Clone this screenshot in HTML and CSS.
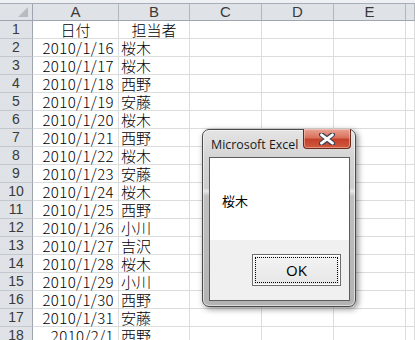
FILE: index.html
```html
<!DOCTYPE html>
<html lang="ja">
<head>
	<meta charset="utf-8" />
	<title>Microsoft Excel</title>
	<link rel="stylesheet" href="styles.css">
</head>
<body>

	<div class="strip"></div>

	<table class="sheet">
		<colgroup>
			<col class="col-head">
			<col class="col-a">
			<col class="col-b">
			<col class="col-n">
			<col class="col-n">
			<col class="col-n">
			<col class="col-end">
		</colgroup>
		<thead>
			<tr><th class="corner"></th><th>A</th><th>B</th><th>C</th><th>D</th><th>E</th><th></th></tr>
		</thead>
		<tbody>
			<tr><th>1</th><td class="mid">日付</td><td class="mid">担当者</td><td></td><td></td><td></td><td></td></tr>
			<tr><th>2</th><td class="num">2010/1/16</td><td>桜木</td><td></td><td></td><td></td><td></td></tr>
			<tr><th>3</th><td class="num">2010/1/17</td><td>桜木</td><td></td><td></td><td></td><td></td></tr>
			<tr><th>4</th><td class="num">2010/1/18</td><td>西野</td><td></td><td></td><td></td><td></td></tr>
			<tr><th>5</th><td class="num">2010/1/19</td><td>安藤</td><td></td><td></td><td></td><td></td></tr>
			<tr><th>6</th><td class="num">2010/1/20</td><td>桜木</td><td></td><td></td><td></td><td></td></tr>
			<tr><th>7</th><td class="num">2010/1/21</td><td>西野</td><td></td><td></td><td></td><td></td></tr>
			<tr><th>8</th><td class="num">2010/1/22</td><td>桜木</td><td></td><td></td><td></td><td></td></tr>
			<tr><th>9</th><td class="num">2010/1/23</td><td>安藤</td><td></td><td></td><td></td><td></td></tr>
			<tr><th>10</th><td class="num">2010/1/24</td><td>桜木</td><td></td><td></td><td></td><td></td></tr>
			<tr><th>11</th><td class="num">2010/1/25</td><td>西野</td><td></td><td></td><td></td><td></td></tr>
			<tr><th>12</th><td class="num">2010/1/26</td><td>小川</td><td></td><td></td><td></td><td></td></tr>
			<tr><th>13</th><td class="num">2010/1/27</td><td>吉沢</td><td></td><td></td><td></td><td></td></tr>
			<tr><th>14</th><td class="num">2010/1/28</td><td>桜木</td><td></td><td></td><td></td><td></td></tr>
			<tr><th>15</th><td class="num">2010/1/29</td><td>小川</td><td></td><td></td><td></td><td></td></tr>
			<tr><th>16</th><td class="num">2010/1/30</td><td>西野</td><td></td><td></td><td></td><td></td></tr>
			<tr><th>17</th><td class="num">2010/1/31</td><td>安藤</td><td></td><td></td><td></td><td></td></tr>
			<tr><th>18</th><td class="num">2010/2/1</td><td>西野</td><td></td><td></td><td></td><td></td></tr>
		</tbody>
	</table>

	<!-- MsgBox -->
	<div class="msgbox">
		<div class="msgbox-title">
			<span>Microsoft Excel</span>
			<div class="close">
				<svg width="16" height="12" viewBox="0 0 16 12">
					<path d="M2.5 1.5 L13.5 10.5 M13.5 1.5 L2.5 10.5" stroke="#3c3f52" stroke-width="5" stroke-linecap="round" />
					<path d="M2.5 1.8 L13.5 10.2 M13.5 1.8 L2.5 10.2" stroke="#ffffff" stroke-width="2.8" stroke-linecap="round" />
				</svg>
			</div>
		</div>
		<div class="msgbox-client">
			<div class="msgbox-body">桜木</div>
			<div class="msgbox-foot">
				<button class="ok"><span>OK</span></button>
			</div>
		</div>
	</div>

</body>
</html>
```

FILE: styles.css
```css
* {
	box-sizing: border-box;
}

body {
	margin: 0;
	padding: 0;
	background: #ffffff;
	overflow: hidden;
	font-family: 'Noto Sans CJK JP', sans-serif;
	font-size: 15px;
	color: #000000;
}

.strip {
	height: 4px;
	background: #eef0f3;
	border-bottom: 1px solid #a7aeb8;
}


/*Sheet*/
.sheet {
	border-collapse: separate;
	border-spacing: 0;
	table-layout: fixed;
	width: 415px;
}
.col-head { width: 33px; }
.col-a { width: 86px; }
.col-b { width: 71px; }
.col-n { width: 72px; }
.col-end { width: 9px; }

.sheet th,
.sheet td {
	height: 18px;
	padding: 0;
	border-right: 1px solid #dadcdd;
	border-bottom: 1px solid #dadcdd;
	line-height: 17px;
	white-space: nowrap;
}
.sheet thead th {
	height: 17px;
	line-height: 16px;
	background: #dfe3e8;
	border-right: 1px solid #b1b7bf;
	border-bottom: 1px solid #9ea5ae;
	font-family: 'Liberation Sans', sans-serif;
	font-weight: 400;
	color: #3a3a3a;
	font-size: 15px;
}
.sheet tbody th {
	background: #dfe3e8;
	border-right: 1px solid #9ea5ae;
	border-bottom: 1px solid #c3c8cf;
	font-family: 'Liberation Sans', sans-serif;
	font-weight: 400;
	color: #3a3a3a;
	font-size: 14px;
	text-align: center;
}
.sheet .corner {
	position: relative;
	border-right: 1px solid #9ea5ae;
}
.sheet .corner::after {
	content: "";
	position: absolute;
	right: 4px;
	bottom: 3px;
	width: 10px;
	height: 10px;
	background: #b7bcc3;
	clip-path: polygon(100% 0, 100% 100%, 0 100%);
}

.sheet td {
	padding: 0 2px;
	font-weight: 300;
}
.sheet td.num {
	text-align: right;
	padding-right: 4px;
	letter-spacing: 0.4px;
}
.sheet td.mid {
	text-align: center;
}


/*MsgBox*/
.msgbox {
	position: absolute;
	left: 202px;
	top: 129px;
	width: 154px;
	height: 178px;
	display: flex;
	flex-direction: column;
	padding: 0 5px 5px 6px;
	border: 1px solid #4a4a4a;
	border-radius: 7px;
	background: linear-gradient(to bottom, #e4e4e4 0px, #d4d4d4 28px, #cdcdcd 58px, #e9e9e9 61px, #c0c0c0 66px, #b3b3b3 100%);
	box-shadow: inset 0 0 0 1px rgba(255, 255, 255, 0.55), 2px 2px 6px rgba(0, 0, 0, 0.45);
}

.msgbox-title {
	height: 27px;
	display: flex;
	flex-direction: row;
	justify-content: space-between;
	align-items: flex-start;
}
.msgbox-title span {
	padding: 6px 0 0 2px;
	font-family: 'Open Sans', sans-serif;
	font-size: 12.4px;
	line-height: 17px;
	white-space: nowrap;
	color: #1a1a1a;
}

.close {
	flex: none;
	width: 48px;
	height: 20px;
	margin: -1px -1px 0 0;
	display: flex;
	align-items: center;
	justify-content: center;
	border: 1px solid #6b2a1e;
	border-top: none;
	border-radius: 0 0 4px 4px;
	background: linear-gradient(to bottom, #e8a394 0%, #d9735d 45%, #c5412a 55%, #cf5b3d 100%);
	box-shadow: inset 0 0 0 1px rgba(255, 220, 210, 0.45);
}

.msgbox-client {
	flex: 1;
	display: flex;
	flex-direction: column;
	border: 1px solid #5c5c5c;
	background: #f0f0f0;
}

.msgbox-body {
	height: 82px;
	display: flex;
	align-items: center;
	padding: 2px 0 0 12px;
	background: #ffffff;
	font-size: 13px;
	color: #000000;
}

.msgbox-foot {
	flex: 1;
	display: flex;
	justify-content: flex-end;
	align-items: center;
	padding-right: 8px;
}

.ok {
	width: 89px;
	height: 32px;
	padding: 2px;
	border: 1px solid #6d6d6d;
	background: linear-gradient(to bottom, #f4f4f4, #e6e6e6);
	box-shadow: inset 0 0 0 1px #ffffff;
	font-family: 'Open Sans', sans-serif;
	font-size: 15px;
	color: #000000;
}
.ok span {
	display: flex;
	align-items: center;
	justify-content: center;
	height: 100%;
	border: 1px dotted #000000;
}
```
